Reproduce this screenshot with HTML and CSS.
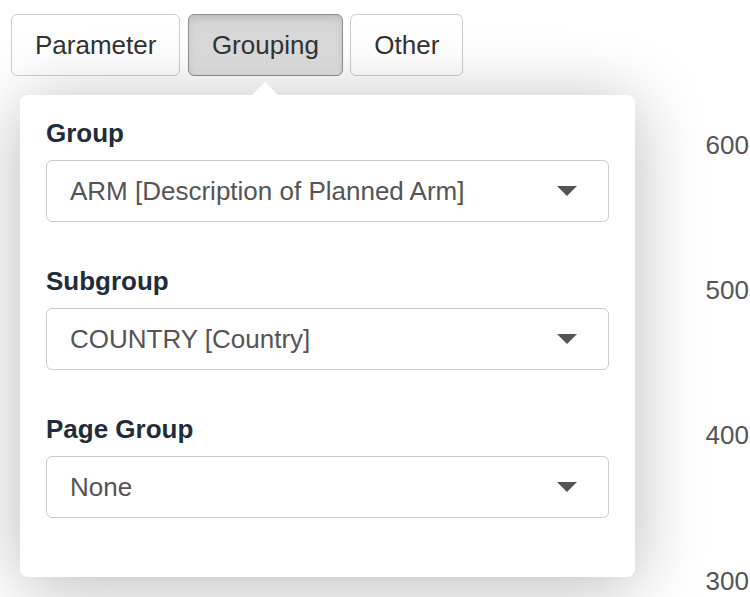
FILE: index.html
```html
<!DOCTYPE html>
<html>
<head>
<meta charset="utf-8">
<link rel="stylesheet" href="styles.css">
</head>
<body>
<div class="page">
  <div class="toolbar">
    <button class="btn">Parameter</button>
    <button class="btn active">Grouping</button>
    <button class="btn">Other</button>
  </div>
  <div class="axis">
    <span class="tick t600">600</span>
    <span class="tick t500">500</span>
    <span class="tick t400">400</span>
    <span class="tick t300">300</span>
  </div>
  <div class="popover">
    <div class="arrow"></div>
    <div class="form-group">
      <label class="lbl">Group</label>
      <div class="select"><span>ARM [Description of Planned Arm]</span><i class="caret"></i></div>
    </div>
    <div class="form-group">
      <label class="lbl">Subgroup</label>
      <div class="select"><span>COUNTRY [Country]</span><i class="caret"></i></div>
    </div>
    <div class="form-group">
      <label class="lbl">Page Group</label>
      <div class="select"><span>None</span><i class="caret"></i></div>
    </div>
  </div>
</div>
</body>
</html>
```
FILE: styles.css
```css
html, body {
  margin: 0;
  padding: 0;
  background: #fff;
}
body {
  font-family: "Liberation Sans", Arial, sans-serif;
  font-size: 26px;
  color: #333;
  width: 750px;
  height: 597px;
  overflow: hidden;
}
.page {
  position: relative;
  width: 750px;
  height: 597px;
}
.toolbar {
  display: flex;
  gap: 7.5px;
  padding: 14px 0 0 11px;
}
.btn {
  font-family: "Liberation Sans", Arial, sans-serif;
  font-size: 26px;
  color: #333;
  height: 62px;
  padding: 0 23px;
  border: 1px solid #ccc;
  border-radius: 6px;
  background: #fff;
  line-height: 60px;
}
.btn.active {
  background: linear-gradient(#d4d4d4, #e0e0e0);
  border-color: #8f8f8f;
  box-shadow: inset 0 4px 6px rgba(0,0,0,0.1);
}
.axis {
  position: absolute;
  top: 0;
  right: 1px;
  width: 60px;
  height: 597px;
}
.tick {
  position: absolute;
  right: 0;
  font-size: 26px;
  line-height: 30px;
  color: #555;
}
.t600 { top: 130px; }
.t500 { top: 275px; }
.t400 { top: 420px; }
.t300 { top: 566px; }
.popover {
  position: absolute;
  top: 95px;
  left: 20px;
  width: 615px;
  height: 482px;
  box-sizing: border-box;
  padding: 20px 26px 0 26px;
  background: #fff;
  border-radius: 8px;
  box-shadow: 0 8px 70px rgba(0,0,0,0.28);
}
.arrow {
  position: absolute;
  top: -13px;
  left: 232px;
  width: 0;
  height: 0;
  border-left: 13px solid transparent;
  border-right: 13px solid transparent;
  border-bottom: 13px solid #fff;
}
.form-group {
  margin-bottom: 41px;
}
.lbl {
  display: block;
  font-weight: bold;
  color: #1f2d3b;
  line-height: 37px;
  margin-bottom: 8px;
}
.select {
  display: flex;
  align-items: center;
  justify-content: space-between;
  height: 62px;
  box-sizing: border-box;
  border: 1px solid #ccc;
  border-radius: 6px;
  padding: 0 31px 0 23px;
  color: #555;
}
.caret {
  width: 0;
  height: 0;
  border-left: 10px solid transparent;
  border-right: 10px solid transparent;
  border-top: 10px solid #555;
}
```
